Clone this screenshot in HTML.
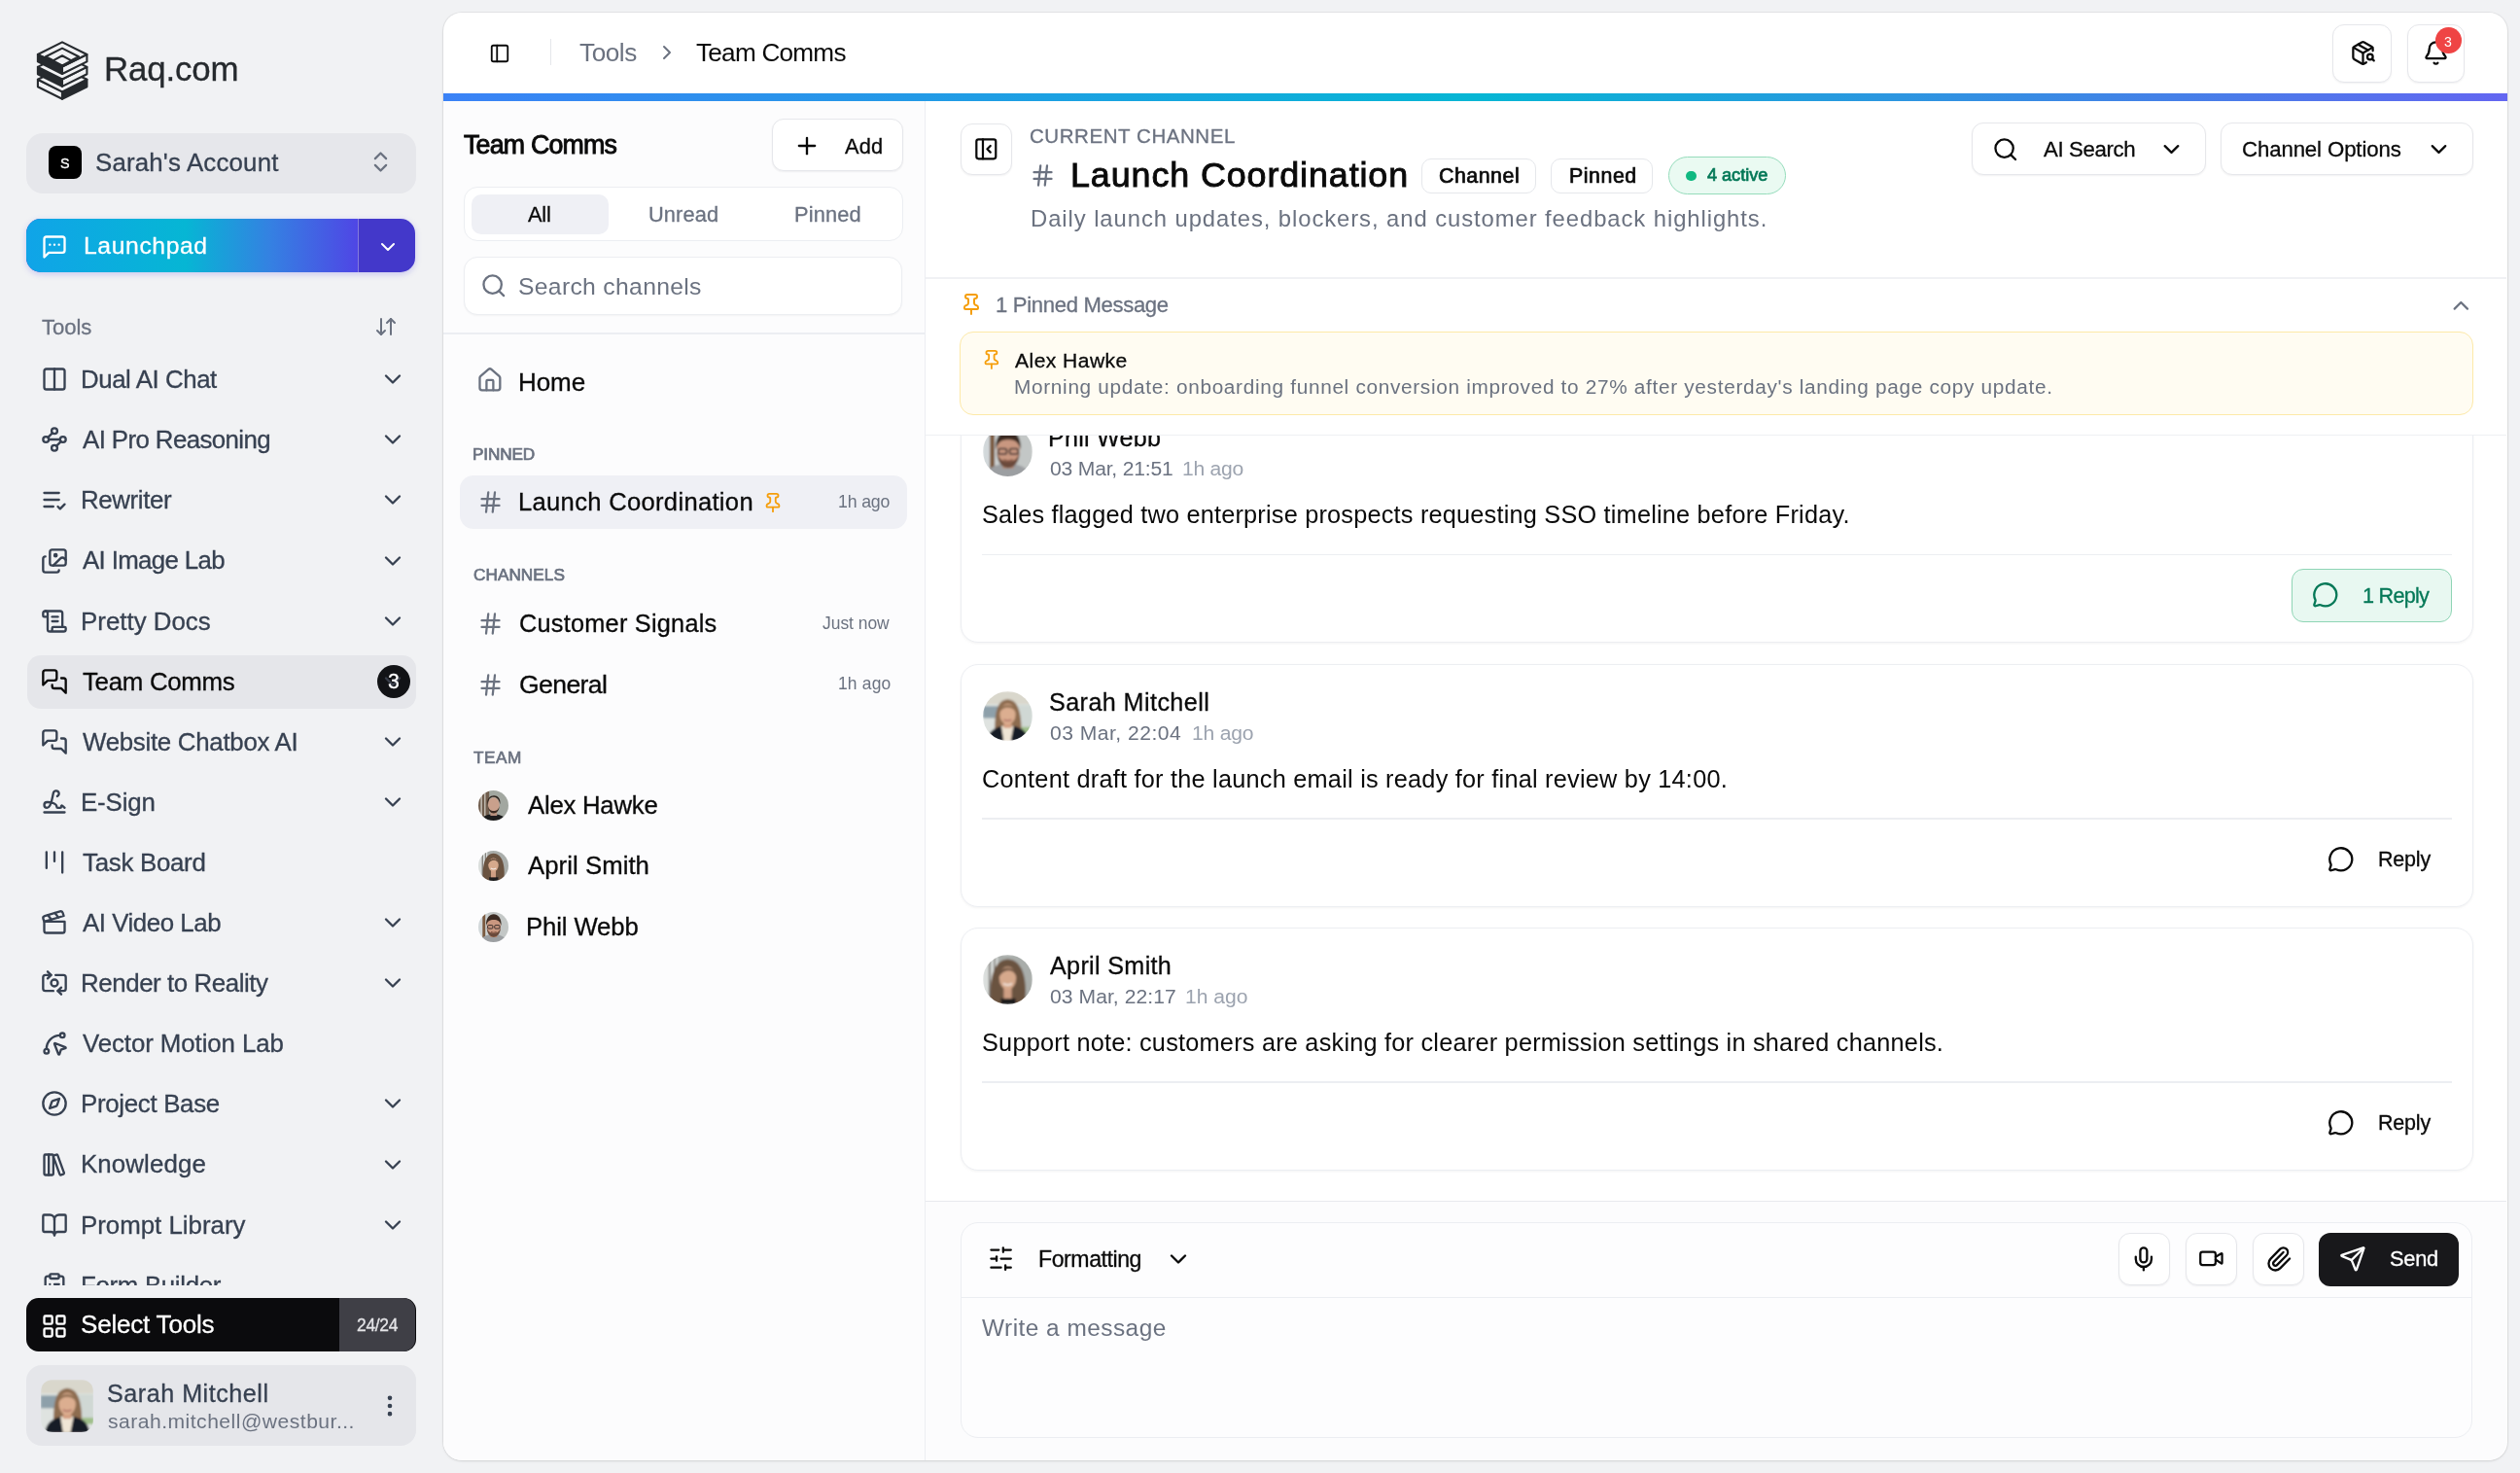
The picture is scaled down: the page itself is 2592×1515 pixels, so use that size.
<!DOCTYPE html><html><head><meta charset="utf-8"><style>
html,body{margin:0;padding:0;}
body{width:2592px;height:1515px;position:relative;overflow:hidden;background:#f1f2f4;font-family:"Liberation Sans",sans-serif;}
.t{position:absolute;white-space:nowrap;will-change:transform;}
svg{display:block}
</style></head><body>
<svg style="position:absolute;left:34px;top:39px" width="60" height="68" viewBox="0 0 60 68"><polygon points="4.9,42.80 30,55.40 30,62.80 4.9,50.20" fill="#f1f2f4" stroke="#262a2e" stroke-width="2.1" stroke-linejoin="round"/><polygon points="30,55.40 55.4,42.80 55.4,50.20 30,62.80" fill="#262a2e" stroke="#262a2e" stroke-width="2.1" stroke-linejoin="round"/><polygon points="30,30.20 4.9,42.80 30,55.40 55.4,42.80" fill="#f1f2f4" stroke="#262a2e" stroke-width="2.1" stroke-linejoin="round"/><polygon points="4.9,29.90 30,42.50 30,49.90 4.9,37.30" fill="#262a2e" stroke="#262a2e" stroke-width="2.1" stroke-linejoin="round"/><polygon points="30,42.50 55.4,29.90 55.4,37.30 30,49.90" fill="#f1f2f4" stroke="#262a2e" stroke-width="2.1" stroke-linejoin="round"/><polygon points="30,17.30 4.9,29.90 30,42.50 55.4,29.90" fill="#f1f2f4" stroke="#262a2e" stroke-width="2.1" stroke-linejoin="round"/><polygon points="4.9,17.00 30,29.60 30,37.00 4.9,24.40" fill="#262a2e" stroke="#262a2e" stroke-width="2.1" stroke-linejoin="round"/><polygon points="30,29.60 55.4,17.00 55.4,24.40 30,37.00" fill="#f1f2f4" stroke="#262a2e" stroke-width="2.1" stroke-linejoin="round"/><polygon points="30,4.40 4.9,17.00 30,29.60 55.4,17.00" fill="#f1f2f4" stroke="#262a2e" stroke-width="2.1" stroke-linejoin="round"/><polygon points="30,10.6 13,19.3 30,28 47,19.3" fill="#f1f2f4" stroke="#262a2e" stroke-width="2.1" stroke-linejoin="round"/><polygon points="30,18.3 20.5,23.4 30,28.5 39.5,23.4" fill="#f1f2f4" stroke="#262a2e" stroke-width="2.1" stroke-linejoin="round"/><polygon points="4.9,17 30,29.6 30,28 13,19.3" fill="#262a2e"/></svg>
<div class="t" style="left:106.60px;top:54px;font-size:34.88px;line-height:34.88px;color:#262a2e;font-weight:normal;letter-spacing:-0.183px;-webkit-text-stroke:0.3px #262a2e;">Raq.com</div>
<div style="position:absolute;left:27px;top:137px;width:401px;height:62px;background:#e6e7eb;border-radius:17px;"></div>
<div style="position:absolute;left:50px;top:150px;width:34px;height:34px;background:#000;border-radius:8px;"></div>
<div class="t" style="left:62.40px;top:161px;font-size:14.39px;line-height:14.39px;color:#fff;font-weight:normal;letter-spacing:0.000px;-webkit-text-stroke:0.3px #fff;">S</div>
<div class="t" style="left:98.00px;top:155px;font-size:25.87px;line-height:25.87px;color:#374151;font-weight:normal;letter-spacing:0.164px;-webkit-text-stroke:0.3px #374151;">Sarah's Account</div>
<svg style="position:absolute;left:378.25px;top:153.20px;color:#6b7280;" width="27" height="27" viewBox="0 0 24 24" fill="none" stroke="#6b7280" stroke-width="2" stroke-linecap="round" stroke-linejoin="round"><path d="m7 15 5 5 5-5"/><path d="m7 9 5-5 5 5"/></svg>
<div style="position:absolute;left:27px;top:225px;width:400.3px;height:55px;border-radius:15px;box-shadow:0 2px 6px rgba(79,70,229,.25);background:#4338ca"></div>
<div style="position:absolute;left:27px;top:225px;width:340.5px;height:55px;background:linear-gradient(90deg,#10a4e8 0%,#06b6d4 48%,#3580e2 74%,#4f46e5 100%);border-radius:15px 0 0 15px;"></div>
<div style="position:absolute;left:367.5px;top:225px;width:1.1999999999999886px;height:55px;background:rgba(255,255,255,.35)"></div>
<svg style="position:absolute;left:41.50px;top:240.30px;color:#fff;" width="28" height="28" viewBox="0 0 24 24" fill="none" stroke="#fff" stroke-width="2" stroke-linecap="round" stroke-linejoin="round"><path d="M21 15a2 2 0 0 1-2 2H7l-4 4V5a2 2 0 0 1 2-2h14a2 2 0 0 1 2 2z"/><path d="M8 10h.01"/><path d="M12 10h.01"/><path d="M16 10h.01"/></svg>
<div class="t" style="left:85.70px;top:241px;font-size:24.71px;line-height:24.71px;color:#fff;font-weight:normal;letter-spacing:0.606px;-webkit-text-stroke:0.3px #fff;">Launchpad</div>
<svg style="position:absolute;left:387.00px;top:241.50px;color:#fff;" width="24" height="24" viewBox="0 0 24 24" fill="none" stroke="#fff" stroke-width="2" stroke-linecap="round" stroke-linejoin="round"><path d="m6 9 6 6 6-6"/></svg>
<div class="t" style="left:42.80px;top:326px;font-size:22.09px;line-height:22.09px;color:#6b7280;font-weight:normal;letter-spacing:-0.050px;-webkit-text-stroke:0.3px #6b7280;">Tools</div>
<svg style="position:absolute;left:385.25px;top:324.00px;color:#6b7280;" width="24" height="24" viewBox="0 0 24 24" fill="none" stroke="#6b7280" stroke-width="2" stroke-linecap="round" stroke-linejoin="round"><path d="m3 16 4 4 4-4"/><path d="M7 20V4"/><path d="m21 8-4-4-4 4"/><path d="M17 4v16"/></svg>
<div style="position:absolute;left:28px;top:674px;width:400px;height:55px;background:#e5e6ea;border-radius:14px"></div>
<div style="position:absolute;left:0;top:0;width:456px;height:1515px;clip-path:inset(300px 0 193px 0)">
<svg style="position:absolute;left:42.00px;top:376.25px;color:#374151;" width="28" height="28" viewBox="0 0 24 24" fill="none" stroke="#374151" stroke-width="2" stroke-linecap="round" stroke-linejoin="round"><rect width="18" height="18" x="3" y="3" rx="2"/><path d="M12 3v18"/></svg>
<div class="t" style="left:83.30px;top:378px;font-size:25.87px;line-height:25.87px;color:#374151;font-weight:normal;letter-spacing:-0.448px;-webkit-text-stroke:0.3px #374151;">Dual AI Chat</div>
<svg style="position:absolute;left:390.25px;top:376.25px;color:#374151;" width="28" height="28" viewBox="0 0 24 24" fill="none" stroke="#374151" stroke-width="2" stroke-linecap="round" stroke-linejoin="round"><path d="m6 9 6 6 6-6"/></svg>
<svg style="position:absolute;left:42.00px;top:438.35px;color:#374151;" width="28" height="28" viewBox="0 0 24 24" fill="none" stroke="#374151" stroke-width="2" stroke-linecap="round" stroke-linejoin="round"><circle cx="12" cy="4.5" r="2.5"/><path d="m10.2 6.3-3.9 3.9"/><circle cx="4.5" cy="12" r="2.5"/><path d="M7 12h10"/><circle cx="19.5" cy="12" r="2.5"/><path d="m13.8 17.7 3.9-3.9"/><circle cx="12" cy="19.5" r="2.5"/></svg>
<div class="t" style="left:85.30px;top:440px;font-size:25.87px;line-height:25.87px;color:#374151;font-weight:normal;letter-spacing:-0.600px;-webkit-text-stroke:0.3px #374151;">AI Pro Reasoning</div>
<svg style="position:absolute;left:390.25px;top:438.35px;color:#374151;" width="28" height="28" viewBox="0 0 24 24" fill="none" stroke="#374151" stroke-width="2" stroke-linecap="round" stroke-linejoin="round"><path d="m6 9 6 6 6-6"/></svg>
<svg style="position:absolute;left:42.00px;top:500.45px;color:#374151;" width="28" height="28" viewBox="0 0 24 24" fill="none" stroke="#374151" stroke-width="2" stroke-linecap="round" stroke-linejoin="round"><path d="M11 18H3"/><path d="m15 18 2 2 4-4"/><path d="M16 12H3"/><path d="M16 6H3"/></svg>
<div class="t" style="left:83.30px;top:502px;font-size:25.87px;line-height:25.87px;color:#374151;font-weight:normal;letter-spacing:-0.379px;-webkit-text-stroke:0.3px #374151;">Rewriter</div>
<svg style="position:absolute;left:390.25px;top:500.45px;color:#374151;" width="28" height="28" viewBox="0 0 24 24" fill="none" stroke="#374151" stroke-width="2" stroke-linecap="round" stroke-linejoin="round"><path d="m6 9 6 6 6-6"/></svg>
<svg style="position:absolute;left:42.00px;top:562.55px;color:#374151;" width="28" height="28" viewBox="0 0 24 24" fill="none" stroke="#374151" stroke-width="2" stroke-linecap="round" stroke-linejoin="round"><path d="m22 11-1.296-1.296a2.4 2.4 0 0 0-3.408 0L11 16"/><path d="M4 8a2 2 0 0 0-2 2v10a2 2 0 0 0 2 2h10a2 2 0 0 0 2-2"/><circle cx="13" cy="7" r="1" fill="currentColor"/><rect x="8" y="2" width="14" height="14" rx="2"/></svg>
<div class="t" style="left:85.30px;top:564px;font-size:25.87px;line-height:25.87px;color:#374151;font-weight:normal;letter-spacing:-0.649px;-webkit-text-stroke:0.3px #374151;">AI Image Lab</div>
<svg style="position:absolute;left:390.25px;top:562.55px;color:#374151;" width="28" height="28" viewBox="0 0 24 24" fill="none" stroke="#374151" stroke-width="2" stroke-linecap="round" stroke-linejoin="round"><path d="m6 9 6 6 6-6"/></svg>
<svg style="position:absolute;left:42.00px;top:624.65px;color:#374151;" width="28" height="28" viewBox="0 0 24 24" fill="none" stroke="#374151" stroke-width="2" stroke-linecap="round" stroke-linejoin="round"><path d="M15 12h-5"/><path d="M15 8h-5"/><path d="M19 17V5a2 2 0 0 0-2-2H4"/><path d="M8 21h12a2 2 0 0 0 2-2v-1a1 1 0 0 0-1-1H11a1 1 0 0 0-1 1v1a2 2 0 1 1-4 0V5a2 2 0 1 0-4 0v2a1 1 0 0 0 1 1h3"/></svg>
<div class="t" style="left:83.30px;top:627px;font-size:25.87px;line-height:25.87px;color:#374151;font-weight:normal;letter-spacing:0.009px;-webkit-text-stroke:0.3px #374151;">Pretty Docs</div>
<svg style="position:absolute;left:390.25px;top:624.65px;color:#374151;" width="28" height="28" viewBox="0 0 24 24" fill="none" stroke="#374151" stroke-width="2" stroke-linecap="round" stroke-linejoin="round"><path d="m6 9 6 6 6-6"/></svg>
<svg style="position:absolute;left:42.00px;top:686.75px;color:#0a0a0a;" width="28" height="28" viewBox="0 0 24 24" fill="none" stroke="#0a0a0a" stroke-width="2" stroke-linecap="round" stroke-linejoin="round"><path d="M14 9a2 2 0 0 1-2 2H6l-4 4V4a2 2 0 0 1 2-2h8a2 2 0 0 1 2 2z"/><path d="M18 9h2a2 2 0 0 1 2 2v11l-4-4h-6a2 2 0 0 1-2-2v-1"/></svg>
<div class="t" style="left:85.30px;top:689px;font-size:25.87px;line-height:25.87px;color:#0a0a0a;font-weight:normal;letter-spacing:-0.306px;-webkit-text-stroke:0.3px #0a0a0a;">Team Comms</div>
<svg style="position:absolute;left:42.00px;top:748.85px;color:#374151;" width="28" height="28" viewBox="0 0 24 24" fill="none" stroke="#374151" stroke-width="2" stroke-linecap="round" stroke-linejoin="round"><path d="M14 9a2 2 0 0 1-2 2H6l-4 4V4a2 2 0 0 1 2-2h8a2 2 0 0 1 2 2z"/><path d="M18 9h2a2 2 0 0 1 2 2v11l-4-4h-6a2 2 0 0 1-2-2v-1"/></svg>
<div class="t" style="left:85.30px;top:751px;font-size:25.87px;line-height:25.87px;color:#374151;font-weight:normal;letter-spacing:-0.287px;-webkit-text-stroke:0.3px #374151;">Website Chatbox AI</div>
<svg style="position:absolute;left:390.25px;top:748.85px;color:#374151;" width="28" height="28" viewBox="0 0 24 24" fill="none" stroke="#374151" stroke-width="2" stroke-linecap="round" stroke-linejoin="round"><path d="m6 9 6 6 6-6"/></svg>
<svg style="position:absolute;left:42.00px;top:810.95px;color:#374151;" width="28" height="28" viewBox="0 0 24 24" fill="none" stroke="#374151" stroke-width="2" stroke-linecap="round" stroke-linejoin="round"><path d="m21 17-2.156-1.868A.5.5 0 0 0 18 15.5v.5a1 1 0 0 1-1 1h-2a1 1 0 0 1-1-1c0-2.545-3.991-3.97-8.5-4a1 1 0 0 0 0 5c4.153 0 4.745-11.295 5.708-13.5a2.5 2.5 0 1 1 3.31 3.284"/><path d="M3 21h18"/></svg>
<div class="t" style="left:83.30px;top:813px;font-size:25.87px;line-height:25.87px;color:#374151;font-weight:normal;letter-spacing:-0.147px;-webkit-text-stroke:0.3px #374151;">E-Sign</div>
<svg style="position:absolute;left:390.25px;top:810.95px;color:#374151;" width="28" height="28" viewBox="0 0 24 24" fill="none" stroke="#374151" stroke-width="2" stroke-linecap="round" stroke-linejoin="round"><path d="m6 9 6 6 6-6"/></svg>
<svg style="position:absolute;left:42.00px;top:873.05px;color:#374151;" width="28" height="28" viewBox="0 0 24 24" fill="none" stroke="#374151" stroke-width="2" stroke-linecap="round" stroke-linejoin="round"><path d="M5 3v14"/><path d="M12 3v8"/><path d="M19 3v18"/></svg>
<div class="t" style="left:85.30px;top:875px;font-size:25.87px;line-height:25.87px;color:#374151;font-weight:normal;letter-spacing:-0.286px;-webkit-text-stroke:0.3px #374151;">Task Board</div>
<svg style="position:absolute;left:42.00px;top:935.15px;color:#374151;" width="28" height="28" viewBox="0 0 24 24" fill="none" stroke="#374151" stroke-width="2" stroke-linecap="round" stroke-linejoin="round"><path d="M20.2 6 3 11l-.9-2.4c-.3-1.1.3-2.2 1.3-2.5l13.5-4c1.1-.3 2.2.3 2.5 1.3Z"/><path d="m6.2 5.3 3.1 3.9"/><path d="m12.4 3.4 3.1 4"/><path d="M3 11h18v8a2 2 0 0 1-2 2H5a2 2 0 0 1-2-2Z"/></svg>
<div class="t" style="left:85.30px;top:937px;font-size:25.87px;line-height:25.87px;color:#374151;font-weight:normal;letter-spacing:-0.458px;-webkit-text-stroke:0.3px #374151;">AI Video Lab</div>
<svg style="position:absolute;left:390.25px;top:935.15px;color:#374151;" width="28" height="28" viewBox="0 0 24 24" fill="none" stroke="#374151" stroke-width="2" stroke-linecap="round" stroke-linejoin="round"><path d="m6 9 6 6 6-6"/></svg>
<svg style="position:absolute;left:42.00px;top:997.25px;color:#374151;" width="28" height="28" viewBox="0 0 24 24" fill="none" stroke="#374151" stroke-width="2" stroke-linecap="round" stroke-linejoin="round"><path d="M11 19H4a2 2 0 0 1-2-2V7a2 2 0 0 1 2-2h5"/><path d="M13 5h7a2 2 0 0 1 2 2v10a2 2 0 0 1-2 2h-5"/><circle cx="12" cy="12" r="3"/><path d="m18 22-3-3 3-3"/><path d="m6 2 3 3-3 3"/></svg>
<div class="t" style="left:83.30px;top:999px;font-size:25.87px;line-height:25.87px;color:#374151;font-weight:normal;letter-spacing:-0.423px;-webkit-text-stroke:0.3px #374151;">Render to Reality</div>
<svg style="position:absolute;left:390.25px;top:997.25px;color:#374151;" width="28" height="28" viewBox="0 0 24 24" fill="none" stroke="#374151" stroke-width="2" stroke-linecap="round" stroke-linejoin="round"><path d="m6 9 6 6 6-6"/></svg>
<svg style="position:absolute;left:42.00px;top:1059.35px;color:#374151;" width="28" height="28" viewBox="0 0 24 24" fill="none" stroke="#374151" stroke-width="2" stroke-linecap="round" stroke-linejoin="round"><path d="M12.034 12.681a.498.498 0 0 1 .647-.647l9 3.5a.5.5 0 0 1-.033.943l-3.444 1.068a1 1 0 0 0-.66.66l-1.067 3.443a.5.5 0 0 1-.943.033z"/><path d="M5 17A12 12 0 0 1 17 5"/><circle cx="19" cy="5" r="2"/><circle cx="5" cy="19" r="2"/></svg>
<div class="t" style="left:85.30px;top:1061px;font-size:25.87px;line-height:25.87px;color:#374151;font-weight:normal;letter-spacing:-0.097px;-webkit-text-stroke:0.3px #374151;">Vector Motion Lab</div>
<svg style="position:absolute;left:42.00px;top:1121.45px;color:#374151;" width="28" height="28" viewBox="0 0 24 24" fill="none" stroke="#374151" stroke-width="2" stroke-linecap="round" stroke-linejoin="round"><path d="m16.24 7.76-1.804 5.411a2 2 0 0 1-1.265 1.265L7.76 16.24l1.804-5.411a2 2 0 0 1 1.265-1.265z"/><circle cx="12" cy="12" r="10"/></svg>
<div class="t" style="left:83.30px;top:1123px;font-size:25.87px;line-height:25.87px;color:#374151;font-weight:normal;letter-spacing:-0.311px;-webkit-text-stroke:0.3px #374151;">Project Base</div>
<svg style="position:absolute;left:390.25px;top:1121.45px;color:#374151;" width="28" height="28" viewBox="0 0 24 24" fill="none" stroke="#374151" stroke-width="2" stroke-linecap="round" stroke-linejoin="round"><path d="m6 9 6 6 6-6"/></svg>
<svg style="position:absolute;left:42.00px;top:1183.55px;color:#374151;" width="28" height="28" viewBox="0 0 24 24" fill="none" stroke="#374151" stroke-width="2" stroke-linecap="round" stroke-linejoin="round"><rect width="8" height="18" x="3" y="3" rx="1"/><path d="M7 3v18"/><path d="M20.4 18.9c.2.5-.1 1.1-.6 1.3l-1.9.7c-.5.2-1.1-.1-1.3-.6L11.1 5.1c-.2-.5.1-1.1.6-1.3l1.9-.7c.5-.2 1.1.1 1.3.6Z"/></svg>
<div class="t" style="left:83.30px;top:1185px;font-size:25.87px;line-height:25.87px;color:#374151;font-weight:normal;letter-spacing:0.103px;-webkit-text-stroke:0.3px #374151;">Knowledge</div>
<svg style="position:absolute;left:390.25px;top:1183.55px;color:#374151;" width="28" height="28" viewBox="0 0 24 24" fill="none" stroke="#374151" stroke-width="2" stroke-linecap="round" stroke-linejoin="round"><path d="m6 9 6 6 6-6"/></svg>
<svg style="position:absolute;left:42.00px;top:1245.65px;color:#374151;" width="28" height="28" viewBox="0 0 24 24" fill="none" stroke="#374151" stroke-width="2" stroke-linecap="round" stroke-linejoin="round"><path d="M12 7v14"/><path d="M3 18a1 1 0 0 1-1-1V4a1 1 0 0 1 1-1h5a4 4 0 0 1 4 4 4 4 0 0 1 4-4h5a1 1 0 0 1 1 1v13a1 1 0 0 1-1 1h-6a3 3 0 0 0-3 3 3 3 0 0 0-3-3z"/></svg>
<div class="t" style="left:83.30px;top:1248px;font-size:25.87px;line-height:25.87px;color:#374151;font-weight:normal;letter-spacing:-0.011px;-webkit-text-stroke:0.3px #374151;">Prompt Library</div>
<svg style="position:absolute;left:390.25px;top:1245.65px;color:#374151;" width="28" height="28" viewBox="0 0 24 24" fill="none" stroke="#374151" stroke-width="2" stroke-linecap="round" stroke-linejoin="round"><path d="m6 9 6 6 6-6"/></svg>
<svg style="position:absolute;left:42.00px;top:1307.75px;color:#374151;" width="28" height="28" viewBox="0 0 24 24" fill="none" stroke="#374151" stroke-width="2" stroke-linecap="round" stroke-linejoin="round"><rect width="8" height="4" x="8" y="2" rx="1" ry="1"/><path d="M16 4h2a2 2 0 0 1 2 2v14a2 2 0 0 1-2 2H6a2 2 0 0 1-2-2V6a2 2 0 0 1 2-2h2"/><path d="M12 11h4"/><path d="M12 16h4"/><path d="M8 11h.01"/><path d="M8 16h.01"/></svg>
<div class="t" style="left:83.30px;top:1310px;font-size:25.87px;line-height:25.87px;color:#374151;font-weight:normal;letter-spacing:-0.327px;-webkit-text-stroke:0.3px #374151;">Form Builder</div>
</div>
<div style="position:absolute;left:387.6px;top:684.1px;width:34.19999999999999px;height:34.10000000000002px;background:#121316;border-radius:50%"></div>
<svg style="position:absolute;left:390.25px;top:686.50px;color:#3a3f4b;" width="28" height="28" viewBox="0 0 24 24" fill="none" stroke="#3a3f4b" stroke-width="2" stroke-linecap="round" stroke-linejoin="round"><path d="m6 9 6 6 6-6"/></svg>
<div class="t" style="left:399.20px;top:690px;font-size:21.22px;line-height:21.22px;color:#fff;font-weight:normal;letter-spacing:0.000px;-webkit-text-stroke:0.3px #fff;">3</div>
<div style="position:absolute;left:27px;top:1335px;width:400.5px;height:55px;background:#0b0b0d;border-radius:12.5px"></div>
<div style="position:absolute;left:348.6px;top:1335px;width:78.89999999999998px;height:55px;background:#3f3f46;border-radius:0 12.5px 12.5px 0"></div>
<svg style="position:absolute;left:41.70px;top:1349.90px;color:#fff;" width="28" height="28" viewBox="0 0 24 24" fill="none" stroke="#fff" stroke-width="2" stroke-linecap="round" stroke-linejoin="round"><rect width="7" height="7" x="3" y="3" rx="1"/><rect width="7" height="7" x="14" y="3" rx="1"/><rect width="7" height="7" x="14" y="14" rx="1"/><rect width="7" height="7" x="3" y="14" rx="1"/></svg>
<div class="t" style="left:82.90px;top:1349px;font-size:26.02px;line-height:26.02px;color:#fff;font-weight:normal;letter-spacing:-0.207px;-webkit-text-stroke:0.3px #fff;">Select Tools</div>
<div class="t" style="left:367.00px;top:1355px;font-size:17.44px;line-height:17.44px;color:#e4e4e7;font-weight:normal;letter-spacing:-0.310px;-webkit-text-stroke:0.3px #e4e4e7;">24/24</div>
<div style="position:absolute;left:27px;top:1403.6px;width:400.5px;height:83.90000000000009px;background:#e5e6ea;border-radius:16px"></div>
<div style="position:absolute;left:41.80px;top:1418.80px;width:54.4px;height:54.4px;border-radius:12px;overflow:hidden"><svg width="54.4" height="54.4" viewBox="0 0 100 100" preserveAspectRatio="none"><defs><filter id="blur1" x="-10%" y="-10%" width="120%" height="120%"><feGaussianBlur stdDeviation="1.6"/></filter></defs><g filter="url(#blur1)"><rect width="100" height="100" fill="#dfe3e0"/><rect x="0" y="0" width="100" height="26" fill="#d9d7cc"/><rect x="0" y="30" width="34" height="24" fill="#8ea0aa"/><rect x="70" y="28" width="30" height="50" fill="#d0d8d4"/><rect x="78" y="72" width="22" height="12" fill="#9fbf8a"/><path d="M24 100 C24 60 22 18 50 16 C78 18 78 60 78 100Z" fill="#8d6c4f"/><path d="M8 100 C10 82 22 74 38 70 L50 100Z" fill="#141a28"/><path d="M92 100 C90 82 80 74 62 70 L50 100Z" fill="#141a28"/><path d="M37 70 L62 70 L56 100 L42 100Z" fill="#efe5d5"/><rect x="42" y="58" width="16" height="16" fill="#d49f82"/><ellipse cx="50" cy="46" rx="16" ry="21" fill="#dcae90"/><path d="M33 44 C33 22 67 22 67 44 C62 30 40 28 33 44Z" fill="#8d6c4f"/><path d="M42 57 Q50 62 58 57" stroke="#b07066" stroke-width="3" fill="none"/></g></svg></div>
<div class="t" style="left:109.80px;top:1421px;font-size:25.15px;line-height:25.15px;color:#374151;font-weight:normal;letter-spacing:0.515px;-webkit-text-stroke:0.3px #374151;">Sarah Mitchell</div>
<div class="t" style="left:110.80px;top:1451px;font-size:21.10px;line-height:21.10px;color:#6b7280;font-weight:normal;letter-spacing:0.485px;">sarah.mitchell@westbur...</div>
<svg style="position:absolute;left:387.00px;top:1432.40px;color:#374151;" width="28" height="28" viewBox="0 0 24 24" fill="none" stroke="#374151" stroke-width="2" stroke-linecap="round" stroke-linejoin="round"><circle cx="12" cy="12" r="1"/><circle cx="12" cy="5" r="1"/><circle cx="12" cy="19" r="1"/></svg>
<div style="position:absolute;left:456px;top:13px;width:2122.5px;height:1488.5px;background:#fff;border-radius:19px;box-shadow:0 0 0 1px rgba(0,0,0,.055),0 1px 3px rgba(0,0,0,.09)"></div>
<svg style="position:absolute;left:502.80px;top:43.60px;color:#0a0a0a;" width="22" height="22" viewBox="0 0 24 24" fill="none" stroke="#0a0a0a" stroke-width="2" stroke-linecap="round" stroke-linejoin="round"><rect width="18" height="18" x="3" y="3" rx="2"/><path d="M9 3v18"/></svg>
<div style="position:absolute;left:565.5px;top:40px;width:1.5px;height:27px;background:#e5e7eb"></div>
<div class="t" style="left:595.80px;top:41px;font-size:26.16px;line-height:26.16px;color:#6b7280;font-weight:normal;letter-spacing:-0.446px;">Tools</div>
<svg style="position:absolute;left:673.50px;top:42.00px;color:#6b7280;" width="24" height="24" viewBox="0 0 24 24" fill="none" stroke="#6b7280" stroke-width="2" stroke-linecap="round" stroke-linejoin="round"><path d="m9 18 6-6-6-6"/></svg>
<div class="t" style="left:716.00px;top:41px;font-size:26.16px;line-height:26.16px;color:#0a0a0a;font-weight:normal;letter-spacing:-0.760px;">Team Comms</div>
<div style="position:absolute;left:2399.3px;top:24.5px;width:60.69999999999982px;height:60.0px;background:#fff;border:1.5px solid #e6e7eb;border-radius:12px;box-sizing:border-box;box-shadow:0 1px 2px rgba(16,24,40,.06);"></div>
<div style="position:absolute;left:2475.5px;top:24.5px;width:59.69999999999982px;height:60.0px;background:#fff;border:1.5px solid #e6e7eb;border-radius:12px;box-sizing:border-box;box-shadow:0 1px 2px rgba(16,24,40,.06);"></div>
<svg style="position:absolute;left:2417.35px;top:40.65px;color:#0a0a0a;" width="27" height="27" viewBox="0 0 24 24" fill="none" stroke="#0a0a0a" stroke-width="2" stroke-linecap="round" stroke-linejoin="round"><path d="M21 10V8a2 2 0 0 0-1-1.73l-7-4a2 2 0 0 0-2 0l-7 4A2 2 0 0 0 3 8v8a2 2 0 0 0 1 1.73l7 4a2 2 0 0 0 2 0l2-1.14"/><path d="m7.5 4.27 9 5.15"/><polyline points="3.29 7 12 12 20.71 7"/><line x1="12" x2="12" y1="22" y2="12"/><circle cx="18.5" cy="15.5" r="2.5"/><path d="M20.27 17.27 22 19"/></svg>
<svg style="position:absolute;left:2491.85px;top:41.30px;color:#0a0a0a;" width="27" height="27" viewBox="0 0 24 24" fill="none" stroke="#0a0a0a" stroke-width="2" stroke-linecap="round" stroke-linejoin="round"><path d="M10.268 21a2 2 0 0 0 3.464 0"/><path d="M3.262 15.326A1 1 0 0 0 4 17h16a1 1 0 0 0 .74-1.673C19.41 13.956 18 12.499 18 8A6 6 0 0 0 6 8c0 4.499-1.411 5.956-2.738 7.326"/></svg>
<div style="position:absolute;left:2505.3px;top:28.3px;width:26.5px;height:26.499999999999996px;background:#ef4444;border-radius:50%"></div>
<div class="t" style="left:2514.20px;top:36px;font-size:14.10px;line-height:14.10px;color:#fff;font-weight:normal;letter-spacing:0.000px;">3</div>
<div style="position:absolute;left:456px;top:96px;width:2122.5px;height:7.5px;background:linear-gradient(90deg,#3b82f6,#06b6d4 50%,#6366f1)"></div>
<div style="position:absolute;left:456px;top:103.5px;width:495px;height:1398.0px;background:#fcfcfd;border-bottom-left-radius:19px"></div>
<div style="position:absolute;left:951px;top:103.5px;width:1.2999999999999545px;height:1398.0px;background:#eceef2"></div>
<div class="t" style="left:477.00px;top:136px;font-size:26.74px;line-height:26.74px;color:#0a0a0a;font-weight:normal;letter-spacing:-0.768px;-webkit-text-stroke:0.9px #0a0a0a;">Team Comms</div>
<div style="position:absolute;left:794.4px;top:122px;width:134.60000000000002px;height:54px;background:#fff;border:1.5px solid #e6e7eb;border-radius:12px;box-sizing:border-box;box-shadow:0 1px 2px rgba(16,24,40,.06);"></div>
<svg style="position:absolute;left:815.70px;top:136.30px;color:#0a0a0a;" width="28" height="28" viewBox="0 0 24 24" fill="none" stroke="#0a0a0a" stroke-width="2" stroke-linecap="round" stroke-linejoin="round"><path d="M5 12h14"/><path d="M12 5v14"/></svg>
<div class="t" style="left:869.00px;top:140px;font-size:21.80px;line-height:21.80px;color:#0a0a0a;font-weight:normal;letter-spacing:0.170px;-webkit-text-stroke:0.3px #0a0a0a;">Add</div>
<div style="position:absolute;left:476.6px;top:191.6px;width:452.4px;height:56.80000000000001px;background:#fff;border:1.5px solid #eceef2;border-radius:14px;box-sizing:border-box"></div>
<div style="position:absolute;left:484.6px;top:199.6px;width:141.0px;height:41.400000000000006px;background:#eff0f5;border-radius:10px"></div>
<div class="t" style="left:543.40px;top:210px;font-size:21.80px;line-height:21.80px;color:#0a0a0a;font-weight:normal;letter-spacing:-0.190px;-webkit-text-stroke:0.3px #0a0a0a;">All</div>
<div class="t" style="left:667.00px;top:210px;font-size:21.80px;line-height:21.80px;color:#6b7280;font-weight:normal;letter-spacing:0.127px;-webkit-text-stroke:0.3px #6b7280;">Unread</div>
<div class="t" style="left:816.60px;top:210px;font-size:21.80px;line-height:21.80px;color:#6b7280;font-weight:normal;letter-spacing:0.130px;-webkit-text-stroke:0.3px #6b7280;">Pinned</div>
<div style="position:absolute;left:476.6px;top:264px;width:451.79999999999995px;height:60px;background:#fff;border:1.5px solid #eceef2;border-radius:14px;box-sizing:border-box;box-shadow:0 1px 2px rgba(0,0,0,.04)"></div>
<svg style="position:absolute;left:493.70px;top:280.20px;color:#6b7280;" width="27.6" height="27.6" viewBox="0 0 24 24" fill="none" stroke="#6b7280" stroke-width="2" stroke-linecap="round" stroke-linejoin="round"><circle cx="11" cy="11" r="8"/><path d="m21 21-4.3-4.3"/></svg>
<div class="t" style="left:533.00px;top:283px;font-size:24.71px;line-height:24.71px;color:#6b7280;font-weight:normal;letter-spacing:0.317px;">Search channels</div>
<div style="position:absolute;left:456px;top:342px;width:495px;height:1.5px;background:#eceef2"></div>
<svg style="position:absolute;left:490.40px;top:377.30px;color:#6b7280;" width="27.8" height="27.8" viewBox="0 0 24 24" fill="none" stroke="#6b7280" stroke-width="2" stroke-linecap="round" stroke-linejoin="round"><path d="M15 21v-8a1 1 0 0 0-1-1h-4a1 1 0 0 0-1 1v8"/><path d="M3 10a2 2 0 0 1 .709-1.528l7-5.999a2 2 0 0 1 2.582 0l7 5.999A2 2 0 0 1 21 10v9a2 2 0 0 1-2 2H5a2 2 0 0 1-2-2z"/></svg>
<div class="t" style="left:533.40px;top:380px;font-size:26.02px;line-height:26.02px;color:#0a0a0a;font-weight:normal;letter-spacing:-0.098px;-webkit-text-stroke:0.3px #0a0a0a;">Home</div>
<div class="t" style="left:486.30px;top:459px;font-size:17.20px;line-height:17.20px;color:#6b7280;font-weight:normal;letter-spacing:-0.166px;-webkit-text-stroke:0.7px #6b7280;">PINNED</div>
<div style="position:absolute;left:472.6px;top:489px;width:460.1px;height:54.799999999999955px;background:#eff0f5;border-radius:14px"></div>
<svg style="position:absolute;left:490.80px;top:502.90px;color:#6b7280;" width="27" height="27" viewBox="0 0 24 24" fill="none" stroke="#6b7280" stroke-width="2" stroke-linecap="round" stroke-linejoin="round"><line x1="4" x2="20" y1="9" y2="9"/><line x1="4" x2="20" y1="15" y2="15"/><line x1="10" x2="8" y1="3" y2="21"/><line x1="16" x2="14" y1="3" y2="21"/></svg>
<div class="t" style="left:533.40px;top:504px;font-size:25.58px;line-height:25.58px;color:#0a0a0a;font-weight:normal;letter-spacing:0.309px;-webkit-text-stroke:0.3px #0a0a0a;">Launch Coordination</div>
<svg style="position:absolute;left:783.80px;top:506.00px;color:#f59e0b;" width="22" height="22" viewBox="0 0 24 24" fill="none" stroke="#f59e0b" stroke-width="2" stroke-linecap="round" stroke-linejoin="round"><path d="M12 17v5"/><path d="M9 10.76a2 2 0 0 1-1.11 1.79l-1.78.9A2 2 0 0 0 5 15.24V16a1 1 0 0 0 1 1h12a1 1 0 0 0 1-1v-.76a2 2 0 0 0-1.11-1.79l-1.78-.9A2 2 0 0 1 15 10.76V7a1 1 0 0 1 1-1 2 2 0 0 0 0-4H8a2 2 0 0 0 0 4 1 1 0 0 1 1 1z"/></svg>
<div class="t" style="left:862.00px;top:508px;font-size:17.73px;line-height:17.73px;color:#6b7280;font-weight:normal;letter-spacing:-0.168px;">1h ago</div>
<div class="t" style="left:487.30px;top:583px;font-size:17.20px;line-height:17.20px;color:#6b7280;font-weight:normal;letter-spacing:0.038px;-webkit-text-stroke:0.7px #6b7280;">CHANNELS</div>
<svg style="position:absolute;left:490.80px;top:628.20px;color:#6b7280;" width="27" height="27" viewBox="0 0 24 24" fill="none" stroke="#6b7280" stroke-width="2" stroke-linecap="round" stroke-linejoin="round"><line x1="4" x2="20" y1="9" y2="9"/><line x1="4" x2="20" y1="15" y2="15"/><line x1="10" x2="8" y1="3" y2="21"/><line x1="16" x2="14" y1="3" y2="21"/></svg>
<div class="t" style="left:534.40px;top:629px;font-size:25.29px;line-height:25.29px;color:#0a0a0a;font-weight:normal;letter-spacing:0.248px;-webkit-text-stroke:0.3px #0a0a0a;">Customer Signals</div>
<div class="t" style="left:846.40px;top:633px;font-size:17.44px;line-height:17.44px;color:#6b7280;font-weight:normal;letter-spacing:-0.017px;">Just now</div>
<svg style="position:absolute;left:490.80px;top:690.50px;color:#6b7280;" width="27" height="27" viewBox="0 0 24 24" fill="none" stroke="#6b7280" stroke-width="2" stroke-linecap="round" stroke-linejoin="round"><line x1="4" x2="20" y1="9" y2="9"/><line x1="4" x2="20" y1="15" y2="15"/><line x1="10" x2="8" y1="3" y2="21"/><line x1="16" x2="14" y1="3" y2="21"/></svg>
<div class="t" style="left:534.40px;top:691px;font-size:26.60px;line-height:26.60px;color:#0a0a0a;font-weight:normal;letter-spacing:-0.608px;-webkit-text-stroke:0.3px #0a0a0a;">General</div>
<div class="t" style="left:862.00px;top:695px;font-size:17.44px;line-height:17.44px;color:#6b7280;font-weight:normal;letter-spacing:0.173px;">1h ago</div>
<div class="t" style="left:487.00px;top:771px;font-size:17.20px;line-height:17.20px;color:#6b7280;font-weight:normal;letter-spacing:0.524px;-webkit-text-stroke:0.7px #6b7280;">TEAM</div>
<div style="position:absolute;left:492.10px;top:813.00px;width:31px;height:31px;border-radius:50%;overflow:hidden"><svg width="31" height="31" viewBox="0 0 100 100" preserveAspectRatio="none"><defs><filter id="blur2" x="-10%" y="-10%" width="120%" height="120%"><feGaussianBlur stdDeviation="1.6"/></filter></defs><g filter="url(#blur2)"><rect width="100" height="100" fill="#a2a7a0"/><rect x="0" y="0" width="36" height="100" fill="#6f5d4d"/><rect x="8" y="0" width="4" height="100" fill="#d8d6d0"/><rect x="20" y="0" width="4" height="100" fill="#cfcbc2"/><ellipse cx="50" cy="110" rx="48" ry="32" fill="#1c1b1d"/><rect x="40" y="62" width="22" height="22" fill="#b68f7c"/><ellipse cx="51" cy="48" rx="19" ry="25" fill="#c9a08c"/><path d="M30 48 C24 8 78 6 72 46 C68 26 58 22 50 22 C40 22 33 28 30 48Z" fill="#2e231c"/><path d="M32 52 C34 84 68 84 70 52 C66 66 60 68 51 68 C42 68 36 66 32 52Z" fill="#3a2a20"/></g></svg></div>
<div class="t" style="left:542.90px;top:816px;font-size:25.73px;line-height:25.73px;color:#0a0a0a;font-weight:normal;letter-spacing:-0.232px;-webkit-text-stroke:0.3px #0a0a0a;">Alex Hawke</div>
<div style="position:absolute;left:492.10px;top:874.70px;width:31px;height:31px;border-radius:50%;overflow:hidden"><svg width="31" height="31" viewBox="0 0 100 100" preserveAspectRatio="none"><defs><filter id="blur3" x="-10%" y="-10%" width="120%" height="120%"><feGaussianBlur stdDeviation="1.6"/></filter></defs><g filter="url(#blur3)"><rect width="100" height="100" fill="#a9adaa"/><rect x="0" y="0" width="30" height="100" fill="#dadedc"/><rect x="12" y="0" width="3" height="100" fill="#5b5550"/><rect x="22" y="0" width="3" height="100" fill="#6b6660"/><path d="M16 100 C12 60 18 10 50 9 C84 10 90 60 84 100Z" fill="#6b5241"/><rect x="36" y="88" width="30" height="12" fill="#1c1a1e"/><rect x="42" y="60" width="16" height="28" fill="#cf9f84"/><ellipse cx="50" cy="47" rx="17" ry="23" fill="#d6a98c"/><path d="M32 46 C30 20 70 20 68 46 C64 28 42 26 32 46Z" fill="#6b5241"/><path d="M41 58 Q50 64 59 58" stroke="#f2e4dc" stroke-width="3.4" fill="none"/></g></svg></div>
<div class="t" style="left:542.90px;top:878px;font-size:25.73px;line-height:25.73px;color:#0a0a0a;font-weight:normal;letter-spacing:0.057px;-webkit-text-stroke:0.3px #0a0a0a;">April Smith</div>
<div style="position:absolute;left:492.10px;top:937.80px;width:31px;height:31px;border-radius:50%;overflow:hidden"><svg width="31" height="31" viewBox="0 0 100 100" preserveAspectRatio="none"><defs><filter id="blur4" x="-10%" y="-10%" width="120%" height="120%"><feGaussianBlur stdDeviation="1.6"/></filter></defs><g filter="url(#blur4)"><rect width="100" height="100" fill="#c3c7c6"/><rect x="0" y="0" width="14" height="100" fill="#d2d8da"/><rect x="14" y="0" width="10" height="100" fill="#7a5a40"/><rect x="24" y="0" width="8" height="100" fill="#cdd2d2"/><ellipse cx="50" cy="108" rx="50" ry="34" fill="#9c9fa2"/><rect x="40" y="62" width="22" height="22" fill="#b98a72"/><ellipse cx="51" cy="47" rx="23" ry="33" fill="#c99780"/><path d="M26 46 C22 -6 80 -6 76 46 C72 30 64 26 51 26 C38 26 30 30 26 46Z" fill="#3b2c22"/><path d="M28 50 C28 94 74 94 74 50 C71 64 64 70 51 70 C38 70 31 64 28 50Z" fill="#6a4a3a"/><rect x="31" y="44" width="17" height="11" rx="3" fill="none" stroke="#2e2626" stroke-width="3"/><rect x="54" y="44" width="17" height="11" rx="3" fill="none" stroke="#2e2626" stroke-width="3"/><path d="M42 66 Q51 71 60 66" stroke="#7a4a3a" stroke-width="3" fill="none"/></g></svg></div>
<div class="t" style="left:540.90px;top:941px;font-size:25.73px;line-height:25.73px;color:#0a0a0a;font-weight:normal;letter-spacing:-0.131px;-webkit-text-stroke:0.3px #0a0a0a;">Phil Webb</div>
<div style="position:absolute;left:987.8px;top:126.9px;width:53.5px;height:53.5px;background:#fff;border:1.5px solid #e6e7eb;border-radius:12px;box-sizing:border-box;box-shadow:0 1px 2px rgba(16,24,40,.06);"></div>
<svg style="position:absolute;left:1001.10px;top:139.55px;color:#0a0a0a;" width="26.6" height="26.6" viewBox="0 0 24 24" fill="none" stroke="#0a0a0a" stroke-width="2" stroke-linecap="round" stroke-linejoin="round"><rect width="18" height="18" x="3" y="3" rx="2"/><path d="M9 3v18"/><path d="m16 15-3-3 3-3"/></svg>
<div class="t" style="left:1059.20px;top:130px;font-size:20.50px;line-height:20.50px;color:#6b7280;font-weight:normal;letter-spacing:0.559px;-webkit-text-stroke:0.3px #6b7280;">CURRENT CHANNEL</div>
<svg style="position:absolute;left:1059.00px;top:166.90px;color:#6b7280;" width="27" height="27" viewBox="0 0 24 24" fill="none" stroke="#6b7280" stroke-width="2" stroke-linecap="round" stroke-linejoin="round"><line x1="4" x2="20" y1="9" y2="9"/><line x1="4" x2="20" y1="15" y2="15"/><line x1="10" x2="8" y1="3" y2="21"/><line x1="16" x2="14" y1="3" y2="21"/></svg>
<div class="t" style="left:1100.50px;top:163px;font-size:35.90px;line-height:35.90px;color:#0a0a0a;font-weight:normal;letter-spacing:0.885px;-webkit-text-stroke:0.9px #0a0a0a;">Launch Coordination</div>
<div style="position:absolute;left:1461.7px;top:162.5px;width:118.79999999999995px;height:36.19999999999999px;background:#fff;border:1.5px solid #e5e7eb;border-radius:10px;box-sizing:border-box"></div>
<div class="t" style="left:1479.80px;top:171px;font-size:21.37px;line-height:21.37px;color:#0a0a0a;font-weight:normal;letter-spacing:0.513px;-webkit-text-stroke:0.7px #0a0a0a;">Channel</div>
<div style="position:absolute;left:1595px;top:162.5px;width:105.29999999999995px;height:36.19999999999999px;background:#fff;border:1.5px solid #e5e7eb;border-radius:10px;box-sizing:border-box"></div>
<div class="t" style="left:1613.70px;top:171px;font-size:21.37px;line-height:21.37px;color:#0a0a0a;font-weight:normal;letter-spacing:0.534px;-webkit-text-stroke:0.7px #0a0a0a;">Pinned</div>
<div style="position:absolute;left:1716.3px;top:161.2px;width:120.40000000000009px;height:39.10000000000002px;background:#eafaf2;border:1.5px solid #95dcbb;border-radius:20px;box-sizing:border-box"></div>
<div style="position:absolute;left:1734px;top:175.5px;width:10.700000000000045px;height:10.699999999999989px;background:#10b981;border-radius:50%"></div>
<div class="t" style="left:1755.80px;top:171px;font-size:18.17px;line-height:18.17px;color:#047857;font-weight:normal;letter-spacing:-0.039px;-webkit-text-stroke:0.7px #047857;">4 active</div>
<div class="t" style="left:1059.80px;top:213px;font-size:23.84px;line-height:23.84px;color:#6b7280;font-weight:normal;letter-spacing:0.926px;">Daily launch updates, blockers, and customer feedback highlights.</div>
<div style="position:absolute;left:2027.9px;top:126.4px;width:240.69999999999982px;height:53.900000000000006px;background:#fff;border:1.5px solid #e6e7eb;border-radius:12px;box-sizing:border-box;box-shadow:0 1px 2px rgba(16,24,40,.06);"></div>
<svg style="position:absolute;left:2049.20px;top:139.70px;color:#0a0a0a;" width="27.5" height="27.5" viewBox="0 0 24 24" fill="none" stroke="#0a0a0a" stroke-width="2" stroke-linecap="round" stroke-linejoin="round"><circle cx="11" cy="11" r="8"/><path d="m21 21-4.3-4.3"/></svg>
<div class="t" style="left:2101.70px;top:143px;font-size:22.24px;line-height:22.24px;color:#0a0a0a;font-weight:normal;letter-spacing:-0.364px;-webkit-text-stroke:0.3px #0a0a0a;">AI Search</div>
<svg style="position:absolute;left:2220.40px;top:140.15px;color:#0a0a0a;" width="27" height="27" viewBox="0 0 24 24" fill="none" stroke="#0a0a0a" stroke-width="2" stroke-linecap="round" stroke-linejoin="round"><path d="m6 9 6 6 6-6"/></svg>
<div style="position:absolute;left:2283.9px;top:126.4px;width:259.6999999999998px;height:53.900000000000006px;background:#fff;border:1.5px solid #e6e7eb;border-radius:12px;box-sizing:border-box;box-shadow:0 1px 2px rgba(16,24,40,.06);"></div>
<div class="t" style="left:2305.80px;top:143px;font-size:22.24px;line-height:22.24px;color:#0a0a0a;font-weight:normal;letter-spacing:-0.129px;-webkit-text-stroke:0.3px #0a0a0a;">Channel Options</div>
<svg style="position:absolute;left:2494.75px;top:140.15px;color:#0a0a0a;" width="27" height="27" viewBox="0 0 24 24" fill="none" stroke="#0a0a0a" stroke-width="2" stroke-linecap="round" stroke-linejoin="round"><path d="m6 9 6 6 6-6"/></svg>
<div style="position:absolute;left:952.3px;top:285px;width:1626.2px;height:1.5px;background:#f0f1f4"></div>
<svg style="position:absolute;left:987.00px;top:301.40px;color:#f59e0b;" width="24" height="24" viewBox="0 0 24 24" fill="none" stroke="#f59e0b" stroke-width="2" stroke-linecap="round" stroke-linejoin="round"><path d="M12 17v5"/><path d="M9 10.76a2 2 0 0 1-1.11 1.79l-1.78.9A2 2 0 0 0 5 15.24V16a1 1 0 0 0 1 1h12a1 1 0 0 0 1-1v-.76a2 2 0 0 0-1.11-1.79l-1.78-.9A2 2 0 0 1 15 10.76V7a1 1 0 0 1 1-1 2 2 0 0 0 0-4H8a2 2 0 0 0 0 4 1 1 0 0 1 1 1z"/></svg>
<div class="t" style="left:1024.00px;top:303px;font-size:22.09px;line-height:22.09px;color:#6b7280;font-weight:normal;letter-spacing:-0.320px;-webkit-text-stroke:0.3px #6b7280;">1 Pinned Message</div>
<svg style="position:absolute;left:2518.45px;top:300.55px;color:#6b7280;" width="26.6" height="26.6" viewBox="0 0 24 24" fill="none" stroke="#6b7280" stroke-width="2" stroke-linecap="round" stroke-linejoin="round"><path d="m18 15-6-6-6 6"/></svg>
<div style="position:absolute;left:987px;top:340.7px;width:1556.5px;height:85.90000000000003px;background:#fffcf2;border:1.5px solid #fde9a8;border-radius:14px;box-sizing:border-box"></div>
<svg style="position:absolute;left:1008.77px;top:359.38px;color:#f59e0b;" width="21.75" height="21.75" viewBox="0 0 24 24" fill="none" stroke="#f59e0b" stroke-width="2" stroke-linecap="round" stroke-linejoin="round"><path d="M12 17v5"/><path d="M9 10.76a2 2 0 0 1-1.11 1.79l-1.78.9A2 2 0 0 0 5 15.24V16a1 1 0 0 0 1 1h12a1 1 0 0 0 1-1v-.76a2 2 0 0 0-1.11-1.79l-1.78-.9A2 2 0 0 1 15 10.76V7a1 1 0 0 1 1-1 2 2 0 0 0 0-4H8a2 2 0 0 0 0 4 1 1 0 0 1 1 1z"/></svg>
<div class="t" style="left:1044.20px;top:360px;font-size:21.08px;line-height:21.08px;color:#0a0a0a;font-weight:normal;letter-spacing:0.445px;-webkit-text-stroke:0.3px #0a0a0a;">Alex Hawke</div>
<div class="t" style="left:1043.20px;top:388px;font-size:20.79px;line-height:20.79px;color:#6b7280;font-weight:normal;letter-spacing:0.684px;">Morning update: onboarding funnel conversion improved to 27% after yesterday's landing page copy update.</div>
<div style="position:absolute;left:952.3px;top:446.5px;width:1626.2px;height:1.5px;background:#eef0f3"></div>
<div style="position:absolute;left:0;top:0;width:2592px;height:1515px;clip-path:inset(448px 0 280px 0)">
<div style="position:absolute;left:988px;top:411.8px;width:1555.5px;height:249.7px;background:#fff;border:1.5px solid #eceef2;border-radius:18px;box-sizing:border-box;box-shadow:0 1px 3px rgba(0,0,0,.05)"></div>
<div style="position:absolute;left:1011.00px;top:439.30px;width:51px;height:51px;border-radius:50%;overflow:hidden"><svg width="51" height="51" viewBox="0 0 100 100" preserveAspectRatio="none"><defs><filter id="blur5" x="-10%" y="-10%" width="120%" height="120%"><feGaussianBlur stdDeviation="1.6"/></filter></defs><g filter="url(#blur5)"><rect width="100" height="100" fill="#c3c7c6"/><rect x="0" y="0" width="14" height="100" fill="#d2d8da"/><rect x="14" y="0" width="10" height="100" fill="#7a5a40"/><rect x="24" y="0" width="8" height="100" fill="#cdd2d2"/><ellipse cx="50" cy="108" rx="50" ry="34" fill="#9c9fa2"/><rect x="40" y="62" width="22" height="22" fill="#b98a72"/><ellipse cx="51" cy="47" rx="23" ry="33" fill="#c99780"/><path d="M26 46 C22 -6 80 -6 76 46 C72 30 64 26 51 26 C38 26 30 30 26 46Z" fill="#3b2c22"/><path d="M28 50 C28 94 74 94 74 50 C71 64 64 70 51 70 C38 70 31 64 28 50Z" fill="#6a4a3a"/><rect x="31" y="44" width="17" height="11" rx="3" fill="none" stroke="#2e2626" stroke-width="3"/><rect x="54" y="44" width="17" height="11" rx="3" fill="none" stroke="#2e2626" stroke-width="3"/><path d="M42 66 Q51 71 60 66" stroke="#7a4a3a" stroke-width="3" fill="none"/></g></svg></div>
<div class="t" style="left:1077.70px;top:438px;font-size:25.15px;line-height:25.15px;color:#0a0a0a;font-weight:normal;letter-spacing:0.227px;-webkit-text-stroke:0.3px #0a0a0a;">Phil Webb</div>
<div class="t" style="left:1079.70px;top:471px;font-size:21.08px;line-height:21.08px;color:#6b7280;font-weight:normal;letter-spacing:-0.182px;">03 Mar, 21:51</div>
<div class="t" style="left:1216.00px;top:471px;font-size:21.08px;line-height:21.08px;color:#9ca3af;font-weight:normal;letter-spacing:-0.262px;">1h ago</div>
<div class="t" style="left:1009.60px;top:517px;font-size:25.29px;line-height:25.29px;color:#0a0a0a;font-weight:normal;letter-spacing:0.211px;">Sales flagged two enterprise prospects requesting SSO timeline before Friday.</div>
<div style="position:absolute;left:1010px;top:569.8px;width:1512px;height:1.5px;background:#eceef2"></div>
<div style="position:absolute;left:2357px;top:585.2px;width:165px;height:54.69999999999993px;background:#e8f8f1;border:1.5px solid #8fd5b5;border-radius:12px;box-sizing:border-box"></div>
<svg style="position:absolute;left:2377.85px;top:598.35px;color:#047857;" width="27.6" height="27.6" viewBox="0 0 24 24" fill="none" stroke="#047857" stroke-width="2" stroke-linecap="round" stroke-linejoin="round"><path d="M2.992 16.342a2 2 0 0 1 .094 1.167l-1.065 3.29a1 1 0 0 0 1.236 1.168l3.413-.998a2 2 0 0 1 1.099.092 10 10 0 1 0-4.777-4.719"/></svg>
<div class="t" style="left:2430.00px;top:602px;font-size:21.66px;line-height:21.66px;color:#047857;font-weight:normal;letter-spacing:-0.759px;-webkit-text-stroke:0.3px #047857;">1 Reply</div>
<div style="position:absolute;left:988px;top:683.4px;width:1555.5px;height:249.69999999999993px;background:#fff;border:1.5px solid #eceef2;border-radius:18px;box-sizing:border-box;box-shadow:0 1px 3px rgba(0,0,0,.05)"></div>
<div style="position:absolute;left:1011.00px;top:710.90px;width:51px;height:51px;border-radius:50%;overflow:hidden"><svg width="51" height="51" viewBox="0 0 100 100" preserveAspectRatio="none"><defs><filter id="blur6" x="-10%" y="-10%" width="120%" height="120%"><feGaussianBlur stdDeviation="1.6"/></filter></defs><g filter="url(#blur6)"><rect width="100" height="100" fill="#dfe3e0"/><rect x="0" y="0" width="100" height="26" fill="#d9d7cc"/><rect x="0" y="30" width="34" height="24" fill="#8ea0aa"/><rect x="70" y="28" width="30" height="50" fill="#d0d8d4"/><rect x="78" y="72" width="22" height="12" fill="#9fbf8a"/><path d="M24 100 C24 60 22 18 50 16 C78 18 78 60 78 100Z" fill="#8d6c4f"/><path d="M8 100 C10 82 22 74 38 70 L50 100Z" fill="#141a28"/><path d="M92 100 C90 82 80 74 62 70 L50 100Z" fill="#141a28"/><path d="M37 70 L62 70 L56 100 L42 100Z" fill="#efe5d5"/><rect x="42" y="58" width="16" height="16" fill="#d49f82"/><ellipse cx="50" cy="46" rx="16" ry="21" fill="#dcae90"/><path d="M33 44 C33 22 67 22 67 44 C62 30 40 28 33 44Z" fill="#8d6c4f"/><path d="M42 57 Q50 62 58 57" stroke="#b07066" stroke-width="3" fill="none"/></g></svg></div>
<div class="t" style="left:1078.70px;top:710px;font-size:25.15px;line-height:25.15px;color:#0a0a0a;font-weight:normal;letter-spacing:0.422px;-webkit-text-stroke:0.3px #0a0a0a;">Sarah Mitchell</div>
<div class="t" style="left:1079.70px;top:743px;font-size:21.08px;line-height:21.08px;color:#6b7280;font-weight:normal;letter-spacing:0.484px;">03 Mar, 22:04</div>
<div class="t" style="left:1226.00px;top:743px;font-size:21.08px;line-height:21.08px;color:#9ca3af;font-weight:normal;letter-spacing:-0.222px;">1h ago</div>
<div class="t" style="left:1009.60px;top:789px;font-size:25.29px;line-height:25.29px;color:#0a0a0a;font-weight:normal;letter-spacing:0.237px;">Content draft for the launch email is ready for final review by 14:00.</div>
<div style="position:absolute;left:1010px;top:841.4px;width:1512px;height:1.5px;background:#eceef2"></div>
<svg style="position:absolute;left:2394.45px;top:869.80px;color:#0a0a0a;" width="27.6" height="27.6" viewBox="0 0 24 24" fill="none" stroke="#0a0a0a" stroke-width="2" stroke-linecap="round" stroke-linejoin="round"><path d="M2.992 16.342a2 2 0 0 1 .094 1.167l-1.065 3.29a1 1 0 0 0 1.236 1.168l3.413-.998a2 2 0 0 1 1.099.092 10 10 0 1 0-4.777-4.719"/></svg>
<div class="t" style="left:2446.30px;top:874px;font-size:21.51px;line-height:21.51px;color:#0a0a0a;font-weight:normal;letter-spacing:-0.204px;-webkit-text-stroke:0.3px #0a0a0a;">Reply</div>
<div style="position:absolute;left:988px;top:954.4px;width:1555.5px;height:249.69999999999993px;background:#fff;border:1.5px solid #eceef2;border-radius:18px;box-sizing:border-box;box-shadow:0 1px 3px rgba(0,0,0,.05)"></div>
<div style="position:absolute;left:1011.00px;top:981.90px;width:51px;height:51px;border-radius:50%;overflow:hidden"><svg width="51" height="51" viewBox="0 0 100 100" preserveAspectRatio="none"><defs><filter id="blur7" x="-10%" y="-10%" width="120%" height="120%"><feGaussianBlur stdDeviation="1.6"/></filter></defs><g filter="url(#blur7)"><rect width="100" height="100" fill="#a9adaa"/><rect x="0" y="0" width="30" height="100" fill="#dadedc"/><rect x="12" y="0" width="3" height="100" fill="#5b5550"/><rect x="22" y="0" width="3" height="100" fill="#6b6660"/><path d="M16 100 C12 60 18 10 50 9 C84 10 90 60 84 100Z" fill="#6b5241"/><rect x="36" y="88" width="30" height="12" fill="#1c1a1e"/><rect x="42" y="60" width="16" height="28" fill="#cf9f84"/><ellipse cx="50" cy="47" rx="17" ry="23" fill="#d6a98c"/><path d="M32 46 C30 20 70 20 68 46 C64 28 42 26 32 46Z" fill="#6b5241"/><path d="M41 58 Q50 64 59 58" stroke="#f2e4dc" stroke-width="3.4" fill="none"/></g></svg></div>
<div class="t" style="left:1079.70px;top:981px;font-size:25.15px;line-height:25.15px;color:#0a0a0a;font-weight:normal;letter-spacing:0.331px;-webkit-text-stroke:0.3px #0a0a0a;">April Smith</div>
<div class="t" style="left:1079.70px;top:1014px;font-size:21.08px;line-height:21.08px;color:#6b7280;font-weight:normal;letter-spacing:0.068px;">03 Mar, 22:17</div>
<div class="t" style="left:1219.00px;top:1014px;font-size:21.08px;line-height:21.08px;color:#9ca3af;font-weight:normal;letter-spacing:-0.022px;">1h ago</div>
<div class="t" style="left:1009.60px;top:1060px;font-size:25.29px;line-height:25.29px;color:#0a0a0a;font-weight:normal;letter-spacing:0.227px;">Support note: customers are asking for clearer permission settings in shared channels.</div>
<div style="position:absolute;left:1010px;top:1112.4px;width:1512px;height:1.5px;background:#eceef2"></div>
<svg style="position:absolute;left:2394.45px;top:1140.80px;color:#0a0a0a;" width="27.6" height="27.6" viewBox="0 0 24 24" fill="none" stroke="#0a0a0a" stroke-width="2" stroke-linecap="round" stroke-linejoin="round"><path d="M2.992 16.342a2 2 0 0 1 .094 1.167l-1.065 3.29a1 1 0 0 0 1.236 1.168l3.413-.998a2 2 0 0 1 1.099.092 10 10 0 1 0-4.777-4.719"/></svg>
<div class="t" style="left:2446.30px;top:1145px;font-size:21.51px;line-height:21.51px;color:#0a0a0a;font-weight:normal;letter-spacing:-0.204px;-webkit-text-stroke:0.3px #0a0a0a;">Reply</div>
</div>
<div style="position:absolute;left:952.3px;top:1235px;width:1626.2px;height:266.5px;background:#fcfcfd;border-top:1.5px solid #e8e9ee;box-sizing:border-box;border-bottom-right-radius:19px"></div>
<div style="position:absolute;left:987.7px;top:1256.9px;width:1555.6000000000001px;height:222.5px;background:#fdfdfe;border:1.5px solid #eceef2;border-radius:18px;box-sizing:border-box"></div>
<div style="position:absolute;left:988.5px;top:1333.5px;width:1554.0px;height:1.5px;background:#eceef2"></div>
<svg style="position:absolute;left:1015.75px;top:1280.90px;color:#0a0a0a;" width="27.2" height="27.2" viewBox="0 0 24 24" fill="none" stroke="#0a0a0a" stroke-width="2" stroke-linecap="round" stroke-linejoin="round"><line x1="21" x2="14" y1="4" y2="4"/><line x1="10" x2="3" y1="4" y2="4"/><line x1="21" x2="12" y1="12" y2="12"/><line x1="8" x2="3" y1="12" y2="12"/><line x1="21" x2="16" y1="20" y2="20"/><line x1="12" x2="3" y1="20" y2="20"/><line x1="14" x2="14" y1="2" y2="6"/><line x1="8" x2="8" y1="10" y2="14"/><line x1="16" x2="16" y1="18" y2="22"/></svg>
<div class="t" style="left:1067.70px;top:1284px;font-size:23.11px;line-height:23.11px;color:#0a0a0a;font-weight:normal;letter-spacing:-0.444px;-webkit-text-stroke:0.3px #0a0a0a;">Formatting</div>
<svg style="position:absolute;left:1198.20px;top:1280.85px;color:#0a0a0a;" width="28" height="28" viewBox="0 0 24 24" fill="none" stroke="#0a0a0a" stroke-width="2" stroke-linecap="round" stroke-linejoin="round"><path d="m6 9 6 6 6-6"/></svg>
<div class="t" style="left:1009.60px;top:1354px;font-size:24.42px;line-height:24.42px;color:#6b7280;font-weight:normal;letter-spacing:0.472px;">Write a message</div>
<div style="position:absolute;left:2178.7px;top:1268px;width:53.80000000000018px;height:54.09999999999991px;background:#fff;border:1.5px solid #e6e7eb;border-radius:12px;box-sizing:border-box;box-shadow:0 1px 2px rgba(16,24,40,.06);"></div>
<div style="position:absolute;left:2247.5px;top:1268px;width:53.69999999999982px;height:54.09999999999991px;background:#fff;border:1.5px solid #e6e7eb;border-radius:12px;box-sizing:border-box;box-shadow:0 1px 2px rgba(16,24,40,.06);"></div>
<div style="position:absolute;left:2316.6px;top:1268px;width:53.70000000000027px;height:54.09999999999991px;background:#fff;border:1.5px solid #e6e7eb;border-radius:12px;box-sizing:border-box;box-shadow:0 1px 2px rgba(16,24,40,.06);"></div>
<svg style="position:absolute;left:2191.38px;top:1280.92px;color:#0a0a0a;" width="27.75" height="27.75" viewBox="0 0 24 24" fill="none" stroke="#0a0a0a" stroke-width="2" stroke-linecap="round" stroke-linejoin="round"><path d="M12 19v3"/><path d="M19 10v2a7 7 0 0 1-14 0v-2"/><rect x="9" y="2" width="6" height="13" rx="3"/></svg>
<svg style="position:absolute;left:2261.10px;top:1281.20px;color:#0a0a0a;" width="26.8" height="26.8" viewBox="0 0 24 24" fill="none" stroke="#0a0a0a" stroke-width="2" stroke-linecap="round" stroke-linejoin="round"><path d="m16 13 5.223 3.482a.5.5 0 0 0 .777-.416V7.87a.5.5 0 0 0-.752-.432L16 10.5"/><rect x="2" y="6" width="14" height="12" rx="2"/></svg>
<svg style="position:absolute;left:2329.70px;top:1280.90px;color:#0a0a0a;" width="27.8" height="27.8" viewBox="0 0 24 24" fill="none" stroke="#0a0a0a" stroke-width="2" stroke-linecap="round" stroke-linejoin="round"><path d="m16 6-8.414 8.586a2 2 0 0 0 2.829 2.829l8.414-8.586a4 4 0 1 0-5.657-5.657l-8.379 8.551a6 6 0 1 0 8.485 8.485l8.379-8.551"/></svg>
<div style="position:absolute;left:2385px;top:1267.5px;width:144px;height:55.200000000000045px;background:#18181b;border-radius:12px"></div>
<svg style="position:absolute;left:2406.25px;top:1280.90px;color:#fff;" width="27.7" height="27.7" viewBox="0 0 24 24" fill="none" stroke="#fff" stroke-width="2" stroke-linecap="round" stroke-linejoin="round"><path d="M14.536 21.686a.5.5 0 0 0 .937-.024l6.5-19a.496.496 0 0 0-.635-.635l-19 6.5a.5.5 0 0 0-.024.937l7.93 3.18a2 2 0 0 1 1.112 1.11z"/><path d="m21.854 2.147-10.94 10.939"/></svg>
<div class="t" style="left:2458.00px;top:1284px;font-size:21.80px;line-height:21.80px;color:#fff;font-weight:normal;letter-spacing:-0.261px;-webkit-text-stroke:0.3px #fff;">Send</div>
</body></html>
